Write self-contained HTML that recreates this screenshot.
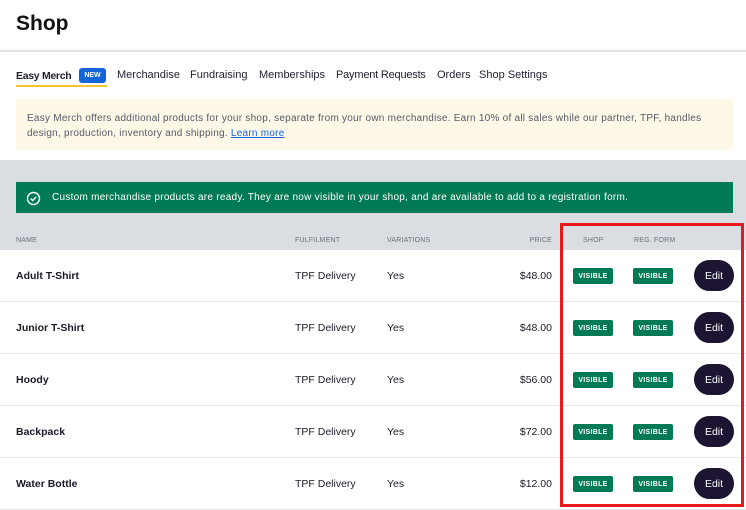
<!DOCTYPE html><html><head><style>
*{margin:0;padding:0;box-sizing:border-box}
body{width:746px;height:507px;overflow:hidden;background:#fff;font-family:"Liberation Sans",sans-serif;color:#1a1a2a;position:relative}
.a{position:absolute;white-space:nowrap}
.tab{font-size:11px;top:69px;color:#1e1e30}
.row{position:absolute;left:0;width:746px;height:52px;border-bottom:1px solid #e6e8ec;font-size:10.5px}
.row div{position:absolute;top:20px}
.b{font-weight:bold}
.pr{right:194px;text-align:right}
.vis{position:absolute;top:18px!important;background:#007a55;color:#fff;font-size:7px;font-weight:bold;letter-spacing:.3px;width:40px;height:16px;line-height:17px;text-align:center;border-radius:2px}
.edit{position:absolute;top:10px!important;left:694px;width:40px;height:31px;border-radius:16px;background:#1c1430;color:#fff;font-size:10.5px;line-height:32px;text-align:center}
.h{font-size:7px;color:#6a6d78;top:236px;letter-spacing:.2px}
</style></head><body>
<div class="a" style="left:16px;top:12px;font-size:21px;font-weight:bold;color:#111">Shop</div>
<div class="a" style="left:0;top:50px;width:746px;height:2px;background:#dfe2e7"></div>
<div class="a tab" style="left:16px;font-weight:bold;letter-spacing:-.3px;font-size:10.5px;top:70px">Easy Merch</div>
<div class="a" style="left:79px;top:68px;width:27px;height:15px;background:#1465d8;border-radius:3px;color:#fff;font-size:7px;font-weight:bold;text-align:center;line-height:15px">NEW</div>
<div class="a" style="left:16px;top:85px;width:91px;height:2px;background:#f5c431"></div>
<div class="a tab" style="left:117px">Merchandise</div>
<div class="a tab" style="left:190px">Fundraising</div>
<div class="a tab" style="left:259px">Memberships</div>
<div class="a tab" style="left:336px;letter-spacing:-.2px">Payment Requests</div>
<div class="a tab" style="left:437px">Orders</div>
<div class="a tab" style="left:479px">Shop Settings</div>
<div class="a" style="left:16px;top:99px;width:717px;height:51px;background:#fdf8e8"></div>
<div class="a" style="left:27px;top:111px;font-size:10px;color:#555a66;line-height:15px;letter-spacing:.25px">Easy Merch offers additional products for your shop, separate from your own merchandise. Earn 10% of all sales while our partner, TPF, handles<br>design, production, inventory and shipping. <span style="color:#1465d8;text-decoration:underline">Learn more</span></div>
<div class="a" style="left:0;top:160px;width:746px;height:90px;background:#dadee3"></div>
<div class="a" style="left:16px;top:182px;width:717px;height:31px;background:#007a55"></div>
<svg class="a" style="left:26px;top:191px" width="15" height="15" viewBox="0 0 15 15"><circle cx="7.5" cy="7.5" r="6" fill="none" stroke="#fff" stroke-width="1.4"/><path d="M4.8 7.6l1.9 1.9 3.5-3.6" fill="none" stroke="#fff" stroke-width="1.4"/></svg>
<div class="a" style="left:52px;top:192px;font-size:10px;color:#fff;letter-spacing:.27px">Custom merchandise products are ready. They are now visible in your shop, and are available to add to a registration form.</div>
<div class="a h" style="left:16px;top:237px">NAME</div>
<div class="a h" style="left:295px;top:237px">FULFILMENT</div>
<div class="a h" style="left:387px;top:237px">VARIATIONS</div>
<div class="a h" style="right:194px;top:237px">PRICE</div>
<div class="a h" style="left:583px;top:237px">SHOP</div>
<div class="a h" style="left:634px;top:237px">REG. FORM</div>
<div class="row" style="top:250px"><div class="b" style="left:16px">Adult T-Shirt</div><div style="left:295px">TPF Delivery</div><div style="left:387px">Yes</div><div class="pr">$48.00</div><div class="vis" style="left:573px">VISIBLE</div><div class="vis" style="left:633px">VISIBLE</div><div class="edit">Edit</div></div>
<div class="row" style="top:302px"><div class="b" style="left:16px">Junior T-Shirt</div><div style="left:295px">TPF Delivery</div><div style="left:387px">Yes</div><div class="pr">$48.00</div><div class="vis" style="left:573px">VISIBLE</div><div class="vis" style="left:633px">VISIBLE</div><div class="edit">Edit</div></div>
<div class="row" style="top:354px"><div class="b" style="left:16px">Hoody</div><div style="left:295px">TPF Delivery</div><div style="left:387px">Yes</div><div class="pr">$56.00</div><div class="vis" style="left:573px">VISIBLE</div><div class="vis" style="left:633px">VISIBLE</div><div class="edit">Edit</div></div>
<div class="row" style="top:406px"><div class="b" style="left:16px">Backpack</div><div style="left:295px">TPF Delivery</div><div style="left:387px">Yes</div><div class="pr">$72.00</div><div class="vis" style="left:573px">VISIBLE</div><div class="vis" style="left:633px">VISIBLE</div><div class="edit">Edit</div></div>
<div class="row" style="top:458px"><div class="b" style="left:16px">Water Bottle</div><div style="left:295px">TPF Delivery</div><div style="left:387px">Yes</div><div class="pr">$12.00</div><div class="vis" style="left:573px">VISIBLE</div><div class="vis" style="left:633px">VISIBLE</div><div class="edit">Edit</div></div>
<div class="a" style="left:560px;top:223px;width:184px;height:284px;border:3px solid #e8191b"></div>
</body></html>
